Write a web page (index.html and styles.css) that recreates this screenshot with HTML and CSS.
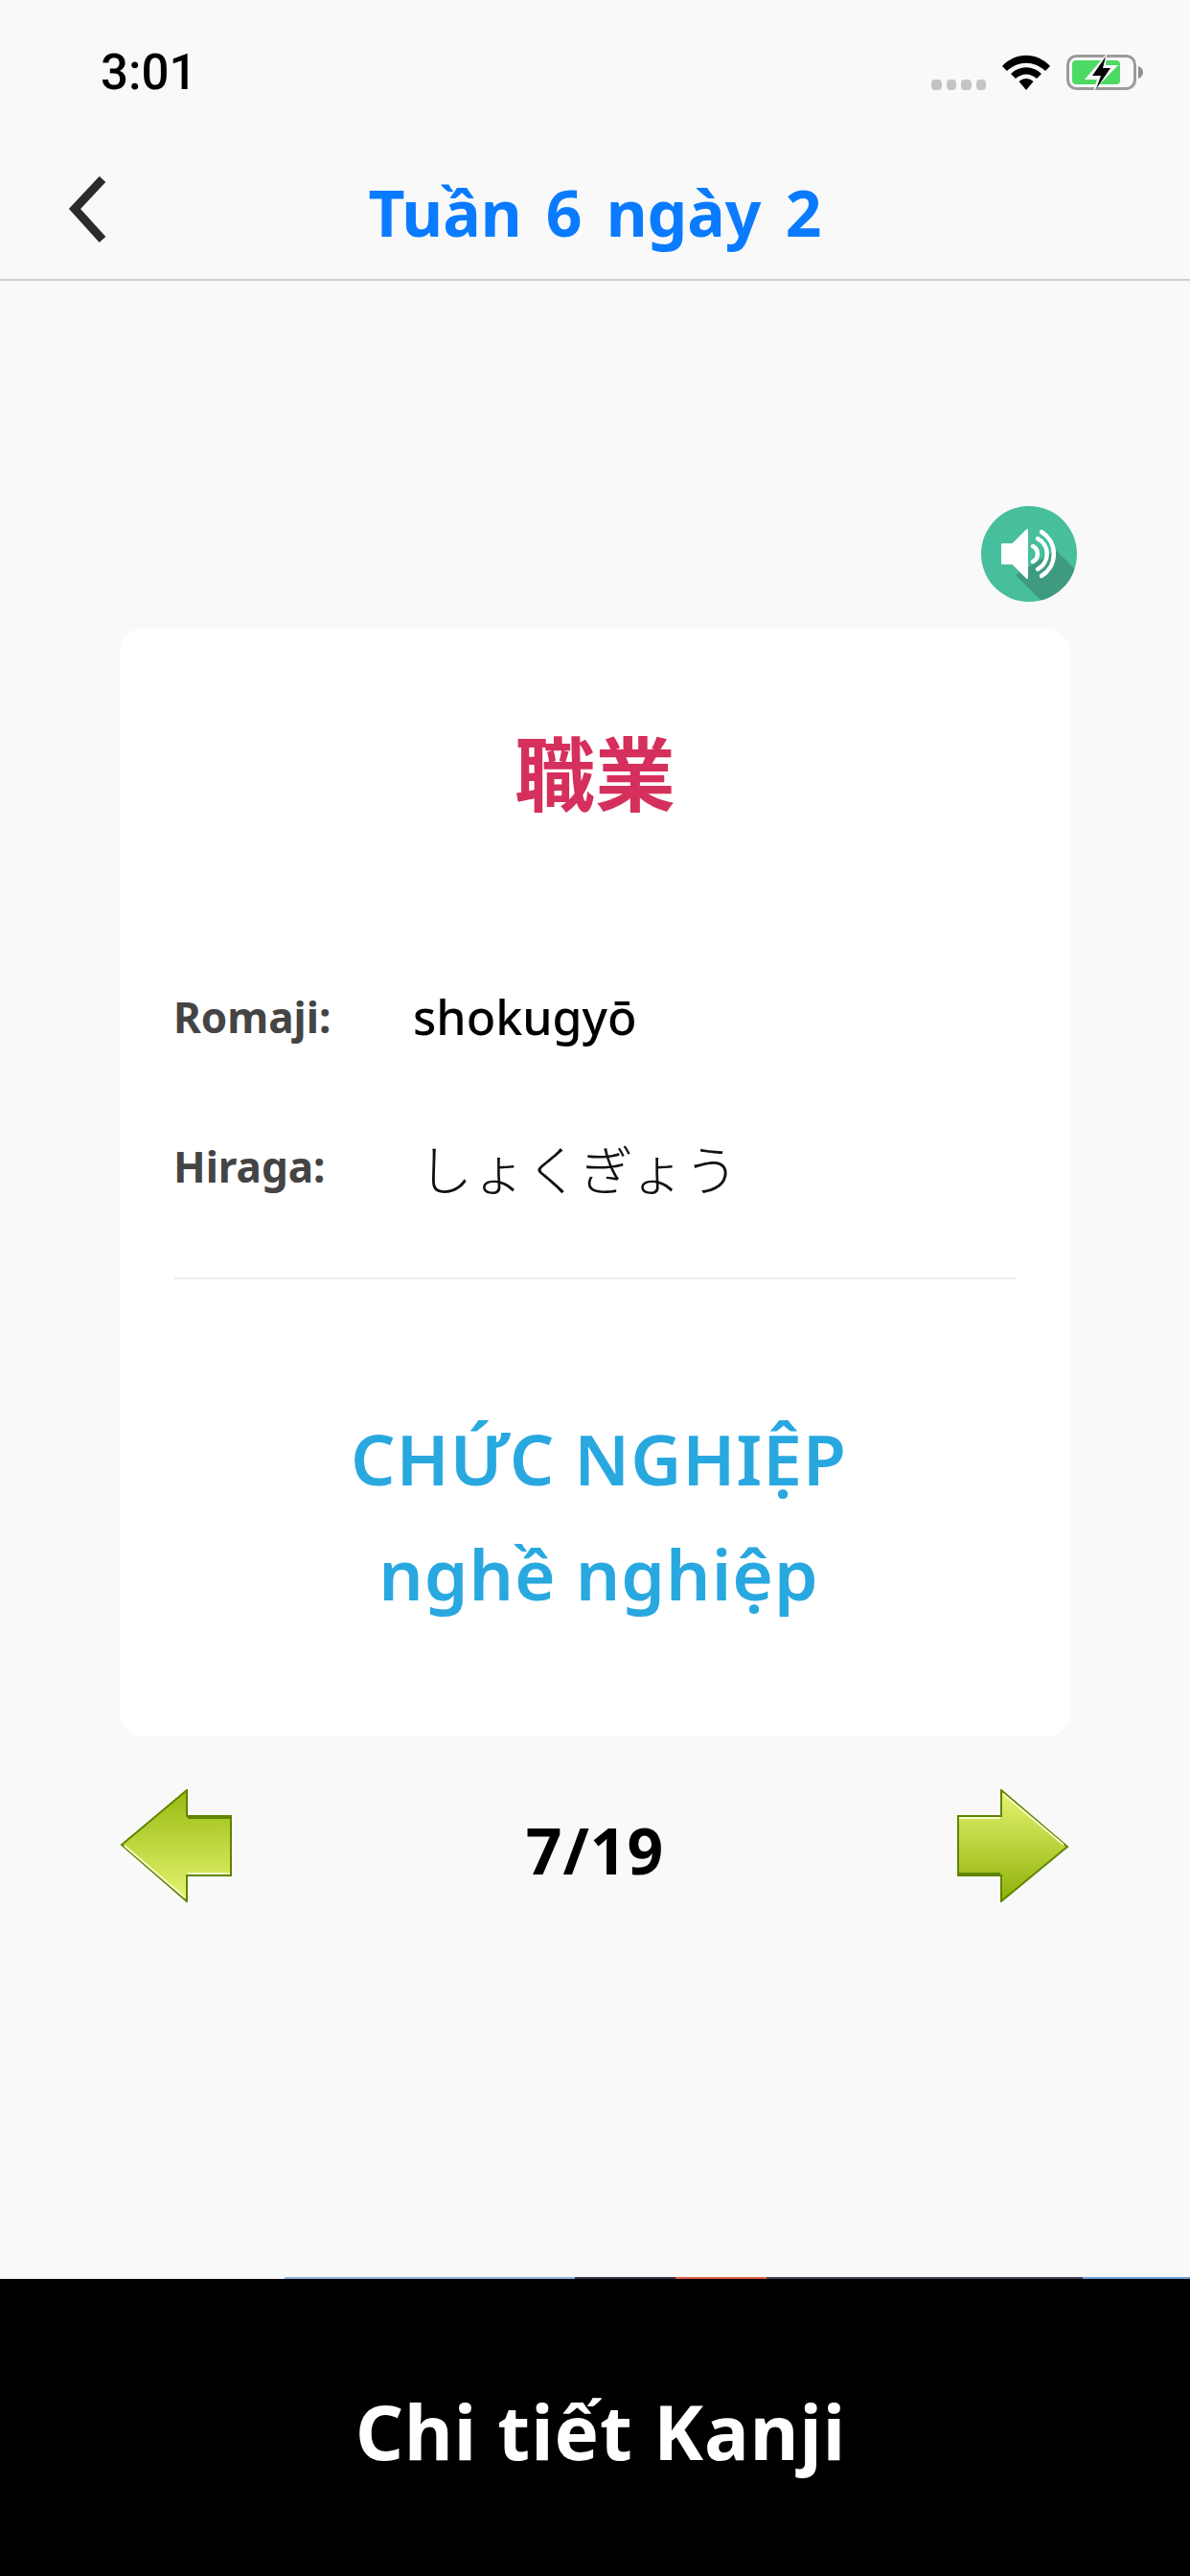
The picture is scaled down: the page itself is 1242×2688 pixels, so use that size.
FILE: index.html
```html
<!DOCTYPE html>
<html lang="en">
<head>
    <meta charset="UTF-8">
    <meta name="viewport" content="width=device-width, initial-scale=1.0">
    <title>Chi tiết Kanji</title>
    <link rel="stylesheet" href="styles.css">
</head>
<body>
    <div class="status-bar">
        <span class="time">3:01</span>
        <div class="status-icons">
            <div class="signal"><i></i><i></i><i></i><i></i></div>
            <svg class="wifi" width="50" height="37" viewBox="0 0 50 37">
                <path d="M0 12 C14 -3 36 -3 50 12 L45 17 C33 6 17 6 5 17 Z" fill="#000"/>
                <path d="M9 20 C18 11 32 11 41 20 L36 25 C29 19 21 19 14 25 Z" fill="#000"/>
                <path d="M17.5 28 C22 24 28 24 32.500 28 L25 37 Z" fill="#000"/>
            </svg>
            <svg class="battery" width="80" height="37" viewBox="0 0 80 37">
                <rect x="1.500" y="1.500" width="70" height="34" rx="9" fill="none" stroke="#9b9b9b" stroke-width="3"/>
                <path d="M75 12 C78 13 80 15.500 80 18.500 C80 21.500 78 24 75 25 Z" fill="#8e8e8e"/>
                <rect x="6" y="6" width="50" height="25" rx="4" fill="#4cd964"/>
                <path d="M42 -1 L19 26 H32 L28 38 L54 11 H41 Z" fill="#f9f9f9"/>
                <path d="M41 2 L27 22 H36 L31 36 L46 14 H38 Z" fill="#000"/>
            </svg>
        </div>
    </div>

    <div class="nav-bar">
        <svg class="back" width="40" height="70" viewBox="0 0 40 70">
            <path d="M35 3 L6 34 L35 66" fill="none" stroke="#2b2b2b" stroke-width="9"/>
        </svg>
        <h1 class="nav-title">Tuần 6 ngày 2</h1>
    </div>

    <div class="content">
        <div class="sound-row">
            <svg class="sound" width="100" height="100" viewBox="0 0 100 100">
                <defs>
                    <clipPath id="soundClip"><circle cx="50" cy="50" r="50"/></clipPath>
                </defs>
                <circle cx="50" cy="50" r="50" fill="#48bf9c"/>
                <path d="M36 72 L78 46 L100 68 L100 100 L62 98 Z" fill="#3e9b7f" clip-path="url(#soundClip)"/>
                <path d="M22 40 H33 L48 25 V75 L33 60 H22 Z" fill="#fff" stroke="#fff" stroke-width="2" stroke-linejoin="round"/>
                <path d="M54 42 A9 9 0 0 1 54 58" fill="none" stroke="#fff" stroke-width="4.500" stroke-linecap="round"/>
                <path d="M59 34 A18 18 0 0 1 59 66" fill="none" stroke="#fff" stroke-width="4.500" stroke-linecap="round"/>
                <path d="M63 27 A27 27 0 0 1 63 73" fill="none" stroke="#fff" stroke-width="4.500" stroke-linecap="round"/>
            </svg>
        </div>

        <div class="card">
            <div class="kanji">職業</div>
            <div class="reading">
                <span class="reading-label">Romaji:</span>
                <span class="reading-value">shokugyō</span>
            </div>
            <div class="reading">
                <span class="reading-label">Hiraga:</span>
                <span class="reading-kana">しょくぎょう</span>
            </div>
            <hr class="divider">
            <div class="meaning">CHỨC NGHIỆP</div>
            <div class="meaning">nghề nghiệp</div>
        </div>

        <div class="pager">
            <svg width="120" height="118" viewBox="0 0 120 118">
                <defs>
                    <linearGradient id="leftFill" x1="0" y1="0" x2="0" y2="1">
                        <stop offset="0" stop-color="#98ba10"/>
                        <stop offset="1" stop-color="#e6f571"/>
                    </linearGradient>
                </defs>
                <path d="M70 1 V28 H116 V90 H70 V117 L2 58 Z" fill="url(#leftFill)" stroke="#5f8500" stroke-width="2"/>
                <path d="M71 30 H115" fill="none" stroke="#5f8500" stroke-width="2"/>
                <path d="M71 88 H115 M5 59 L68 113" fill="none" stroke="#f6fbc8" stroke-width="2"/>
            </svg>
            <span class="page-count">7/19</span>
            <svg width="120" height="118" viewBox="0 0 120 118">
                <defs>
                    <linearGradient id="rightFill" x1="0" y1="0" x2="0" y2="1">
                        <stop offset="0" stop-color="#e6f571"/>
                        <stop offset="1" stop-color="#8fb008"/>
                    </linearGradient>
                </defs>
                <path d="M48 1 V28 H3 V90 H48 V117 L117 60 Z" fill="url(#rightFill)" stroke="#5f8500" stroke-width="2"/>
                <path d="M4 30 H47 M50 5 L113 58" fill="none" stroke="#f6fbc8" stroke-width="2"/>
                <path d="M4 88 H47" fill="none" stroke="#5f8500" stroke-width="2"/>
            </svg>
        </div>
    </div>

    <div class="footer-line"></div>
    <div class="footer">Chi tiết Kanji</div>
</body>
</html>
```

FILE: styles.css
```css
* {
    box-sizing: border-box;
}
body {
    font-family: "Noto Sans", "Noto Sans CJK JP", sans-serif;
    background-color: #f9f9f9;
    margin: 0;
    width: 1242px;
    height: 2688px;
    display: flex;
    flex-direction: column;
    overflow: hidden;
}

/* status bar */
.status-bar {
    height: 150px;
    padding: 57px 49px 0 105px;
    display: flex;
    justify-content: space-between;
    align-items: flex-start;
}
.time {
    font-family: Roboto, sans-serif;
    font-size: 51px;
    font-weight: 500;
    line-height: 38px;
    color: #000;
}
.status-icons {
    display: flex;
    align-items: flex-end;
}
.signal {
    display: flex;
    gap: 5px;
    margin-right: 17px;
}
.signal i {
    display: block;
    width: 10.500px;
    height: 11px;
    border-radius: 4px;
    background: #c4c4c4;
}
.battery {
    margin-left: 17px;
}

/* nav */
.nav-bar {
    height: 143px;
    border-bottom: 2px solid #cfcfcf;
    display: flex;
    align-items: center;
    position: relative;
    justify-content: center;
}
.back {
    position: absolute;
    left: 72px;
    top: 34px;
}
.nav-title {
    margin: 0;
    font-size: 66px;
    font-weight: 700;
    color: #0a7bff;
    word-spacing: 8px;
}

/* content */
.content {
    flex: 1;
    padding: 235px 125px 0;
}
.sound-row {
    display: flex;
    justify-content: flex-end;
    margin-right: -7px;
    margin-bottom: 27px;
}
.sound {
    display: block;
}
.card {
    background: white;
    border-radius: 26px;
    height: 1157px;
    padding: 0 56px;
}
.kanji {
    height: 328px;
    padding-top: 97px;
    text-align: center;
    font-size: 84px;
    line-height: 112px;
    font-weight: 700;
    color: #d5305c;
}
.reading {
    height: 156px;
    display: flex;
    align-items: center;
}
.reading-label {
    width: 250px;
    font-size: 44px;
    font-weight: 700;
    color: #444;
}
.reading-value {
    font-size: 50px;
    font-weight: 500;
    color: #000;
}
.reading-kana {
    padding-left: 6px;
    font-size: 56px;
    font-weight: 300;
    color: #111;
}
.divider {
    margin: 38px 0 127px;
    border: none;
    border-top: 2px solid #ececec;
}
.meaning {
    height: 120px;
    padding-left: 8px;
    text-align: center;
    font-size: 73px;
    line-height: 120px;
    font-weight: 600;
    letter-spacing: 1px;
    color: #29a8e0;
}

/* pager */
.pager {
    margin-top: 55px;
    display: flex;
    justify-content: space-between;
    align-items: center;
}
.page-count {
    padding-top: 8px;
    font-size: 66px;
    font-weight: 700;
    letter-spacing: 1px;
    color: #000;
}

/* footer */
.footer-line {
    height: 2px;
    background: linear-gradient(to right,
        transparent 297px, #8fb5e0 297px, #8fb5e0 600px,
        #334 600px, #334 705px, #e0604a 705px, #e0604a 800px,
        #445 800px, #445 1130px, #6d9fd8 1130px);
}
.footer {
    height: 310px;
    padding: 8px 0 0 12px;
    background: #000;
    display: flex;
    justify-content: center;
    align-items: center;
    font-size: 78px;
    font-weight: 700;
    letter-spacing: 1px;
    color: #fff;
}
```
